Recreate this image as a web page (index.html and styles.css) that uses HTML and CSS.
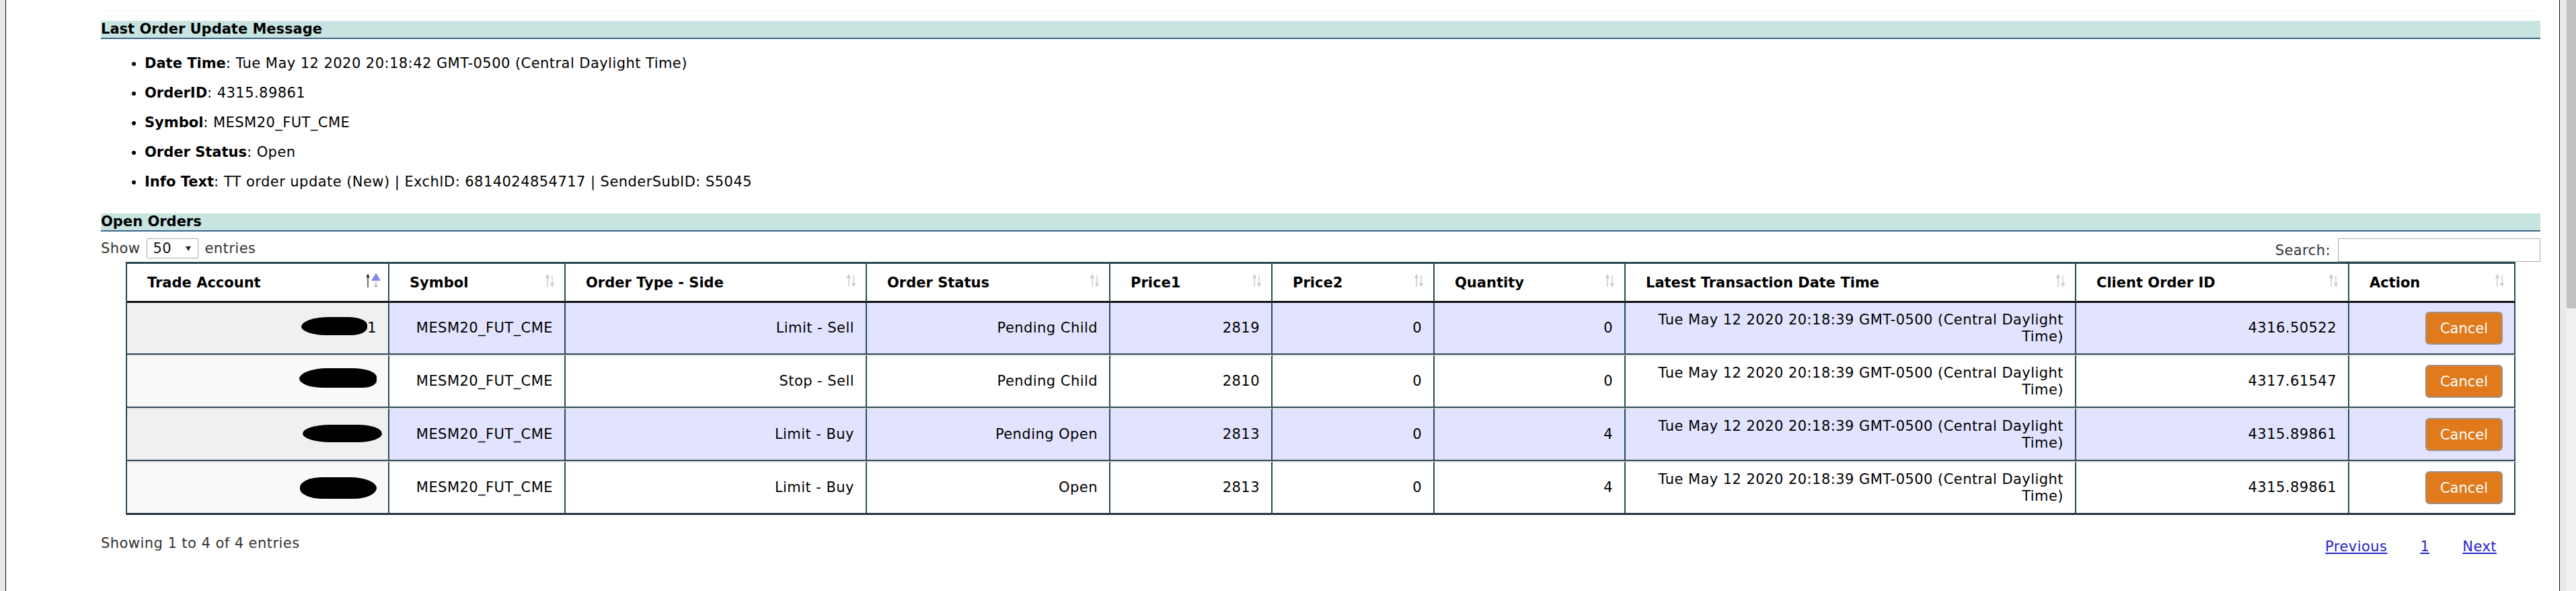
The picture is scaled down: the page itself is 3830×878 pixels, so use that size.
FILE: index.html
```html
<!DOCTYPE html>
<html lang="en">
<head>
<meta charset="utf-8">
<title>Orders</title>
<link rel="stylesheet" href="styles.css">
</head>
<body>
<div class="shell">
  <div class="frame">
    <div class="topline"></div>
    <h3 class="bar">Last Order Update Message</h3>
    <ul class="info">
      <li><b>Date Time</b>: Tue May 12 2020 20:18:42 GMT-0500 (Central Daylight Time)</li>
      <li><b>OrderID</b>: 4315.89861</li>
      <li><b>Symbol</b>: MESM20_FUT_CME</li>
      <li><b>Order Status</b>: Open</li>
      <li><b>Info Text</b>: TT order update (New) | ExchID: 6814024854717 | SenderSubID: S5045</li>
    </ul>
    <h3 class="bar">Open Orders</h3>
    <div class="controls">
      <div class="length">Show <div class="select-box"><span>50</span><svg width="10" height="10" viewBox="0 0 10 10"><path d="M1 2h8L5 9z" fill="#222"/></svg></div> entries</div>
      <div class="filter">Search: <div class="search-box"></div></div>
    </div>
    <table class="orders">
      <thead>
        <tr>
          <th class="c1"><div class="th-in"><span>Trade Account</span><svg class="sort" viewBox="0 0 24 24" width="24" height="24"><path d="M3 22V3M1 7.5l2-4.5 2 4.5" stroke="#111" stroke-width="1.2" fill="none"/><path d="M8 12L15 0.5 22 12z" fill="#8585ec"/><path d="M15 13v8M12.5 18l2.5 3.5 2.5-3.5" stroke="#aaa" stroke-width="1.2" fill="none"/></svg></div></th>
          <th class="c2"><div class="th-in"><span>Symbol</span><svg class="sort" viewBox="0 0 24 24" width="24" height="24"><path d="M8 21V4M5.5 8.5L8 3.5l2.5 5" stroke="#c2c2c2" stroke-width="1.3" fill="none"/><path d="M15 4v13" stroke="#c8c8c8" stroke-width="1.3"/><path d="M11.5 15.5h7L15 21.5z" fill="#cdcdcd"/></svg></div></th>
          <th class="c3"><div class="th-in"><span>Order Type - Side</span><svg class="sort" viewBox="0 0 24 24" width="24" height="24"><path d="M8 21V4M5.5 8.5L8 3.5l2.5 5" stroke="#c2c2c2" stroke-width="1.3" fill="none"/><path d="M15 4v13" stroke="#c8c8c8" stroke-width="1.3"/><path d="M11.5 15.5h7L15 21.5z" fill="#cdcdcd"/></svg></div></th>
          <th class="c4"><div class="th-in"><span>Order Status</span><svg class="sort" viewBox="0 0 24 24" width="24" height="24"><path d="M8 21V4M5.5 8.5L8 3.5l2.5 5" stroke="#c2c2c2" stroke-width="1.3" fill="none"/><path d="M15 4v13" stroke="#c8c8c8" stroke-width="1.3"/><path d="M11.5 15.5h7L15 21.5z" fill="#cdcdcd"/></svg></div></th>
          <th class="c5"><div class="th-in"><span>Price1</span><svg class="sort" viewBox="0 0 24 24" width="24" height="24"><path d="M8 21V4M5.5 8.5L8 3.5l2.5 5" stroke="#c2c2c2" stroke-width="1.3" fill="none"/><path d="M15 4v13" stroke="#c8c8c8" stroke-width="1.3"/><path d="M11.5 15.5h7L15 21.5z" fill="#cdcdcd"/></svg></div></th>
          <th class="c6"><div class="th-in"><span>Price2</span><svg class="sort" viewBox="0 0 24 24" width="24" height="24"><path d="M8 21V4M5.5 8.5L8 3.5l2.5 5" stroke="#c2c2c2" stroke-width="1.3" fill="none"/><path d="M15 4v13" stroke="#c8c8c8" stroke-width="1.3"/><path d="M11.5 15.5h7L15 21.5z" fill="#cdcdcd"/></svg></div></th>
          <th class="c7"><div class="th-in"><span>Quantity</span><svg class="sort" viewBox="0 0 24 24" width="24" height="24"><path d="M8 21V4M5.5 8.5L8 3.5l2.5 5" stroke="#c2c2c2" stroke-width="1.3" fill="none"/><path d="M15 4v13" stroke="#c8c8c8" stroke-width="1.3"/><path d="M11.5 15.5h7L15 21.5z" fill="#cdcdcd"/></svg></div></th>
          <th class="c8"><div class="th-in"><span>Latest Transaction Date Time</span><svg class="sort" viewBox="0 0 24 24" width="24" height="24"><path d="M8 21V4M5.5 8.5L8 3.5l2.5 5" stroke="#c2c2c2" stroke-width="1.3" fill="none"/><path d="M15 4v13" stroke="#c8c8c8" stroke-width="1.3"/><path d="M11.5 15.5h7L15 21.5z" fill="#cdcdcd"/></svg></div></th>
          <th class="c9"><div class="th-in"><span>Client Order ID</span><svg class="sort" viewBox="0 0 24 24" width="24" height="24"><path d="M8 21V4M5.5 8.5L8 3.5l2.5 5" stroke="#c2c2c2" stroke-width="1.3" fill="none"/><path d="M15 4v13" stroke="#c8c8c8" stroke-width="1.3"/><path d="M11.5 15.5h7L15 21.5z" fill="#cdcdcd"/></svg></div></th>
          <th class="c10"><div class="th-in"><span>Action</span><svg class="sort" viewBox="0 0 24 24" width="24" height="24"><path d="M8 21V4M5.5 8.5L8 3.5l2.5 5" stroke="#c2c2c2" stroke-width="1.3" fill="none"/><path d="M15 4v13" stroke="#c8c8c8" stroke-width="1.3"/><path d="M11.5 15.5h7L15 21.5z" fill="#cdcdcd"/></svg></div></th>
        </tr>
      </thead>
      <tbody>
        <tr class="odd">
          <td class="acct"><span class="redact r1"></span>1</td>
          <td>MESM20_FUT_CME</td>
          <td>Limit - Sell</td>
          <td>Pending Child</td>
          <td>2819</td>
          <td>0</td>
          <td>0</td>
          <td>Tue May 12 2020 20:18:39 GMT-0500 (Central Daylight Time)</td>
          <td>4316.50522</td>
          <td><button class="cancel">Cancel</button></td>
        </tr>
        <tr class="even">
          <td class="acct"><span class="redact r2"></span></td>
          <td>MESM20_FUT_CME</td>
          <td>Stop - Sell</td>
          <td>Pending Child</td>
          <td>2810</td>
          <td>0</td>
          <td>0</td>
          <td>Tue May 12 2020 20:18:39 GMT-0500 (Central Daylight Time)</td>
          <td>4317.61547</td>
          <td><button class="cancel">Cancel</button></td>
        </tr>
        <tr class="odd">
          <td class="acct"><span class="redact r3"></span></td>
          <td>MESM20_FUT_CME</td>
          <td>Limit - Buy</td>
          <td>Pending Open</td>
          <td>2813</td>
          <td>0</td>
          <td>4</td>
          <td>Tue May 12 2020 20:18:39 GMT-0500 (Central Daylight Time)</td>
          <td>4315.89861</td>
          <td><button class="cancel">Cancel</button></td>
        </tr>
        <tr class="even last">
          <td class="acct"><span class="redact r4"></span></td>
          <td>MESM20_FUT_CME</td>
          <td>Limit - Buy</td>
          <td>Open</td>
          <td>2813</td>
          <td>0</td>
          <td>4</td>
          <td>Tue May 12 2020 20:18:39 GMT-0500 (Central Daylight Time)</td>
          <td>4315.89861</td>
          <td><button class="cancel">Cancel</button></td>
        </tr>
      </tbody>
    </table>
    <div class="footer">
      <div class="info-text">Showing 1 to 4 of 4 entries</div>
      <div class="paging"><a href="#">Previous</a><a href="#">1</a><a href="#">Next</a></div>
    </div>
  </div>
  <div class="gutter"></div>
  <div class="scrollbar"><div class="thumb"></div></div>
</div>
</body>
</html>
```
FILE: styles.css
```css
html, body {
  margin: 0;
  height: 878px;
  overflow: hidden;
}
body {
  background: #e8eaea;
  font-family: "DejaVu Sans", Verdana, sans-serif;
  font-size: 21px;
  letter-spacing: 0.45px;
  color: #000;
}
b, th, .bar {
  letter-spacing: 0;
}
.shell {
  display: flex;
  height: 878px;
  padding-left: 8px;
}
.frame {
  width: 3798px;
  box-sizing: border-box;
  border-left: 1px solid #15122e;
  border-right: 1px solid #15122e;
  background: #fff;
  padding: 15px 28px 0 141px;
}
.gutter {
  width: 10px;
  background: #e8eaea;
}
.scrollbar {
  width: 14px;
  background: #f1f1f1;
}
.thumb {
  height: 458px;
  background: #c1c1c1;
}
.topline {
  border-top: 1px solid #f4f4f4;
}
.bar {
  margin: 15px 0 0;
  height: 25px;
  line-height: 25px;
  background: #c8e4e0;
  border-bottom: 2px solid #3b6689;
  font-size: 21px;
  font-weight: bold;
  color: #000;
}
.info {
  margin: 24px 0 34px;
  padding-left: 65px;
  list-style: disc;
}
.info li {
  line-height: 25px;
  margin-bottom: 19px;
}
.info li:last-child {
  margin-bottom: 0;
}
.controls {
  display: flex;
  justify-content: space-between;
  align-items: flex-start;
  margin-top: 10px;
  color: #333;
}
.length {
  display: flex;
  align-items: center;
  height: 30px;
}
.select-box {
  display: flex;
  align-items: center;
  justify-content: space-between;
  box-sizing: border-box;
  width: 77px;
  height: 30px;
  margin: 0 9px 0 10px;
  padding: 0 9px 0 8px;
  border: 1px solid #a9a9a9;
  border-radius: 2px;
  color: #111;
}
.filter {
  display: flex;
  align-items: center;
  gap: 11px;
  height: 35px;
}
.search-box {
  width: 301px;
  height: 35px;
  box-sizing: border-box;
  border: 1px solid #a9a9a9;
}
.orders {
  width: 3553px;
  margin: 0 auto;
  table-layout: fixed;
  border-collapse: separate;
  border-spacing: 0;
  border-top: 3px solid #2a4a54;
  border-left: 2px solid #2a4a54;
}
.orders th, .orders td {
  box-sizing: border-box;
  border-right: 2px solid #2a4a54;
}
.c1 { width: 390px; }
.c2 { width: 262px; }
.c3 { width: 448px; }
.c4 { width: 362px; }
.c5 { width: 241px; }
.c6 { width: 241px; }
.c7 { width: 284px; }
.c8 { width: 670px; }
.c9 { width: 406px; }
.c10 { width: 247px; }
.orders th {
  height: 58px;
  padding: 0 9px 0 30px;
  background: #fff;
  border-bottom: 3px solid #111;
  font-weight: bold;
  text-align: left;
}
.th-in {
  display: flex;
  justify-content: space-between;
  align-items: center;
}
.sort {
  flex: none;
  margin-top: -6px;
}
.orders td {
  height: 77px;
  padding: 0 17px;
  text-align: right;
  vertical-align: middle;
  line-height: 25px;
  border-bottom: 2px solid #2d4b55;
}
.orders tr + tr td {
  height: 79px;
  border-top: 2px solid #dfe4e4;
}
.orders tr.last td {
  height: 80px;
  border-bottom: 3px solid #1e343c;
}
.odd td { background: #e2e4ff; }
.odd td.acct { background: #f0f0f0; }
.even td { background: #fff; }
.even td.acct { background: #f9f9f9; }
.redact {
  display: inline-block;
  vertical-align: middle;
  background: #000;
}
.r1 { width: 98px; height: 27px; border-radius: 45% 30% 25% 40% / 55% 45% 45% 50%; margin-top: -8px; }
.r2 { width: 115px; height: 29px; border-radius: 40% 35% 20% 35% / 60% 50% 40% 50%; margin-top: -12px; }
.r3 { width: 118px; height: 26px; border-radius: 35% 30% 30% 35% / 50% 50% 50% 50%; margin-right: -8px; margin-top: -4px; }
.r4 { width: 114px; height: 32px; border-radius: 30% 35% 30% 30% / 45% 50% 50% 45%; }
.cancel {
  box-sizing: border-box;
  height: 49px;
  width: 115px;
  padding: 0;
  border: 2px solid #a08f86;
  border-radius: 6px;
  background: #e07a1c;
  color: #fff;
  font-family: "DejaVu Sans", Verdana, sans-serif;
  font-size: 21px;
  letter-spacing: 0;
}
.footer {
  display: flex;
  justify-content: space-between;
  align-items: flex-start;
  margin-top: 30px;
}
.info-text {
  line-height: 25px;
  color: #333;
}
.paging {
  display: flex;
  gap: 49px;
  padding-top: 5px;
  margin-right: 65px;
  line-height: 25px;
}
.paging a {
  color: #2424c6;
  text-decoration: underline;
}
```
